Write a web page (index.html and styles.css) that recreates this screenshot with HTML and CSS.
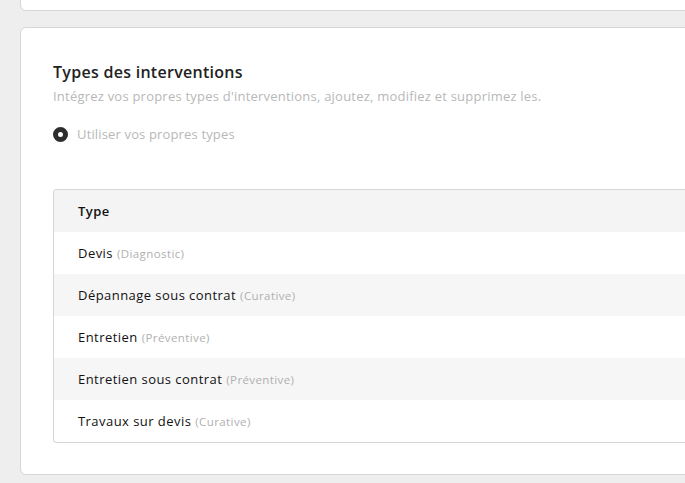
FILE: index.html
```html
<!DOCTYPE html>
<html lang="fr">

<head>
    <meta charset="UTF-8">
    <meta name="viewport" content="width=device-width, initial-scale=1.0">
    <title>Types des interventions</title>
    <link rel="stylesheet" href="styles.css">
</head>

<body>
    <div class="page">
        <!-- Previous section (cut off) -->
        <div class="card card-top"></div>

        <!-- Intervention types -->
        <div class="card">
            <h2 class="card-title">Types des interventions</h2>
            <p class="card-subtitle">Intégrez vos propres types d'interventions, ajoutez, modifiez et supprimez les.</p>

            <label class="radio">
                <span class="radio-dot"></span>
                Utiliser vos propres types
            </label>

            <div class="types-table">
                <div class="types-head">Type</div>
                <div class="types-row">Devis <span class="kind">(Diagnostic)</span></div>
                <div class="types-row">Dépannage sous contrat <span class="kind">(Curative)</span></div>
                <div class="types-row">Entretien <span class="kind">(Préventive)</span></div>
                <div class="types-row">Entretien sous contrat <span class="kind">(Préventive)</span></div>
                <div class="types-row">Travaux sur devis <span class="kind">(Curative)</span></div>
            </div>
        </div>
    </div>
</body>

</html>
```

FILE: styles.css
```css
/* General Body Styling */
body {
    font-family: "Open Sans", Arial, sans-serif;
    background-color: #eeeeee;
    margin: 0;
    overflow: hidden;
}

.page {
    padding-left: 20px;
    width: 800px;
}

.card {
    background-color: #fff;
    border: 1px solid #d6d6d6;
    border-radius: 6px;
    padding: 30px 32px 31px;
    margin-bottom: 16px;
}

.card-top {
    padding: 0;
    margin-top: -20px;
    height: 29px;
}

.card-title {
    margin: 0;
    font-size: 16px;
    font-weight: 600;
    letter-spacing: 0.28px;
    color: #222;
    line-height: 28px;
}

.card-subtitle {
    margin: 0;
    font-size: 13px;
    letter-spacing: 0.22px;
    color: #b8b8b8;
    line-height: 20px;
}

.radio {
    display: flex;
    align-items: center;
    gap: 9px;
    margin-top: 19px;
    font-size: 13px;
    letter-spacing: 0.15px;
    color: #b8b8b8;
}

.radio-dot {
    width: 5px;
    height: 5px;
    border-radius: 50%;
    border: 5px solid #2e2e2e;
    background-color: #fff;
    box-sizing: content-box;
}

.types-table {
    margin-top: 46px;
    border: 1px solid #d6d6d6;
    border-right: none;
    border-radius: 4px 0 0 4px;
    overflow: hidden;
}

.types-head,
.types-row {
    height: 42px;
    display: flex;
    align-items: center;
    gap: 4px;
    padding-left: 24px;
    font-size: 13px;
    letter-spacing: 0.45px;
    color: #111;
}

.types-head {
    background-color: #f4f4f4;
    font-weight: 600;
}

.types-row:nth-child(odd) {
    background-color: #f6f6f6;
}

.kind {
    font-size: 11.5px;
    letter-spacing: 0.4px;
    color: #b0b0b0;
}
```
